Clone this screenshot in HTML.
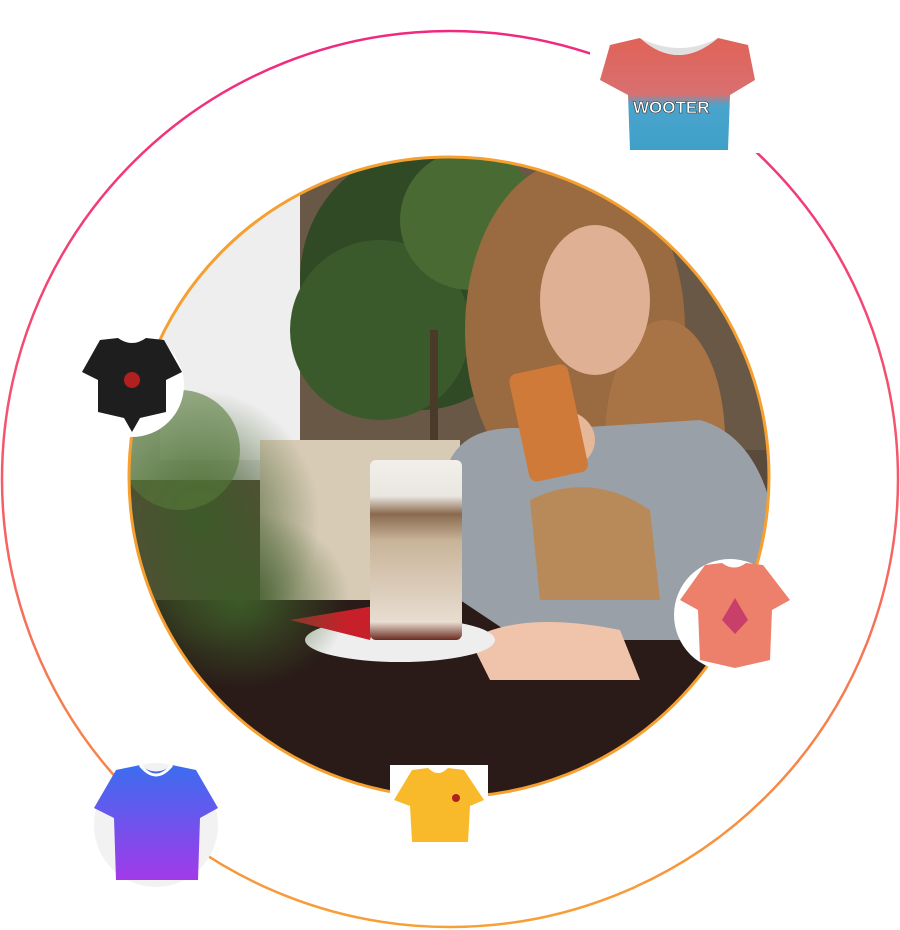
<!DOCTYPE html>
<html><head><meta charset="utf-8"><style>
html,body{margin:0;padding:0;background:#fff;width:900px;height:930px;overflow:hidden;position:relative;font-family:"Liberation Sans",sans-serif}
.abs{position:absolute}
</style></head><body>
<svg class="abs" style="left:0;top:0" width="900" height="930" viewBox="0 0 900 930">
<defs>
<linearGradient id="ring" x1="0" y1="0" x2="0" y2="1">
<stop offset="0" stop-color="#f0287f"/><stop offset="0.5" stop-color="#f55a6a"/><stop offset="1" stop-color="#f7a035"/></linearGradient>
<clipPath id="cc"><circle cx="449" cy="477" r="320"/></clipPath>
<radialGradient id="blur" cx="0.5" cy="0.5" r="0.5"><stop offset="0" stop-color="#3d5a28"/><stop offset="1" stop-color="#3d5a28" stop-opacity="0"/></radialGradient>
<linearGradient id="glass" x1="0" y1="0" x2="0" y2="1"><stop offset="0" stop-color="#f2efea"/><stop offset="0.2" stop-color="#eae6e0"/><stop offset="0.3" stop-color="#8a6a4e"/><stop offset="0.45" stop-color="#c9b49a"/><stop offset="0.9" stop-color="#e7ddd0"/><stop offset="1" stop-color="#6a2a20"/></linearGradient>
<linearGradient id="blue" x1="0" y1="0" x2="0" y2="1"><stop offset="0" stop-color="#3b6df0"/><stop offset="1" stop-color="#a23ae8"/></linearGradient>
<linearGradient id="crop" x1="0" y1="0" x2="0" y2="1"><stop offset="0" stop-color="#e06258"/><stop offset="0.5" stop-color="#d87070"/><stop offset="0.6" stop-color="#4aa4cc"/><stop offset="1" stop-color="#3fa0c8"/></linearGradient>
</defs>
<circle cx="450" cy="479" r="448" fill="none" stroke="url(#ring)" stroke-width="2.5"/>
<g clip-path="url(#cc)">
<rect x="120" y="150" width="660" height="660" fill="#5a4a3c"/>
<rect x="120" y="150" width="200" height="330" fill="#dcdcdc"/>
<rect x="160" y="160" width="150" height="300" fill="#eeeeee"/>
<rect x="300" y="160" width="480" height="290" fill="#6a5846"/>
<ellipse cx="420" cy="280" rx="120" ry="130" fill="#2f4a24"/>
<ellipse cx="380" cy="330" rx="90" ry="90" fill="#3b5a2c"/>
<ellipse cx="470" cy="220" rx="70" ry="70" fill="#4a6a34"/>
<rect x="430" y="330" width="8" height="120" fill="#4a3a2a"/>
<rect x="260" y="440" width="200" height="180" fill="#d8cbb6"/>
<rect x="120" y="600" width="660" height="220" fill="#2a1a18"/>
<ellipse cx="575" cy="330" rx="110" ry="170" fill="#9a6a40"/>
<ellipse cx="665" cy="440" rx="60" ry="120" fill="#a87446"/>
<path d="M450 460 Q470 420 540 430 L700 420 Q770 440 780 560 L700 640 L520 640 L460 600 Z" fill="#9aa0a8"/>
<path d="M530 500 Q590 470 650 510 L660 600 L540 600 Z" fill="#b88a5a"/>
<ellipse cx="595" cy="300" rx="55" ry="75" fill="#e0b094"/>
<ellipse cx="560" cy="440" rx="35" ry="30" fill="#e6b89a"/>
<rect x="518" y="368" width="60" height="110" rx="8" fill="#d07a3a" transform="rotate(-12 548 420)"/>
<path d="M470 640 Q520 610 620 630 L640 680 L490 680 Z" fill="#f0c4aa"/>
<ellipse cx="400" cy="640" rx="95" ry="22" fill="#eeeeee"/>
<path d="M290 620 L380 605 L370 640 Z" fill="#c8202a"/>
<rect x="370" y="460" width="92" height="180" rx="6" fill="url(#glass)"/>
<ellipse cx="200" cy="520" rx="120" ry="130" fill="url(#blur)"/>
<ellipse cx="240" cy="600" rx="110" ry="90" fill="url(#blur)"/>
<ellipse cx="180" cy="450" rx="60" ry="60" fill="#567a3a" opacity="0.6"/>
</g>
<circle cx="449" cy="477" r="320" fill="none" stroke="#f5a030" stroke-width="3"/>
<rect x="590" y="35" width="170" height="118" fill="#fff"/>
<path d="M610 45 L640 38 Q678 72 718 38 L748 45 L755 80 L730 95 L728 150 L630 150 L628 95 L600 80 Z" fill="url(#crop)"/>
<path d="M640 38 Q678 72 718 38 Q680 58 640 38 Z" fill="#e0e0e0"/>
<text x="633" y="113" font-size="17" font-weight="bold" fill="#fff" stroke="#333" stroke-width="0.6">WOOTER</text>
<circle cx="132" cy="385" r="52" fill="#fff"/>
<path d="M100 340 L118 338 Q132 348 146 338 L164 340 L182 372 L166 380 L166 412 L140 418 L132 432 L124 418 L98 412 L98 380 L82 372 Z" fill="#1e1e1e"/>
<circle cx="132" cy="380" r="8" fill="#b02020"/>
<circle cx="730" cy="615" r="56" fill="#fff"/>
<path d="M705 565 L722 563 Q734 572 746 563 L763 565 L790 600 L772 610 L770 660 L735 668 L700 660 L698 610 L680 600 Z" fill="#ec806a"/>
<path d="M735 598 L748 620 L735 634 L722 620 Z" fill="#c8406a"/>
<circle cx="156" cy="825" r="62" fill="#f2f2f2"/>
<path d="M116 770 L140 765 Q156 778 172 765 L196 770 L218 808 L200 818 L198 880 L116 880 L114 818 L94 808 Z" fill="url(#blue)"/>
<path d="M140 765 Q156 785 172 765" fill="none" stroke="#fff" stroke-width="3"/>
<rect x="390" y="765" width="98" height="82" fill="#fff"/>
<path d="M412 770 L428 768 Q438 778 448 768 L464 770 L484 800 L470 806 L468 842 L412 842 L410 806 L394 800 Z" fill="#f8b92a"/>
<circle cx="456" cy="798" r="4" fill="#b02020"/>
</svg>
</body></html>
